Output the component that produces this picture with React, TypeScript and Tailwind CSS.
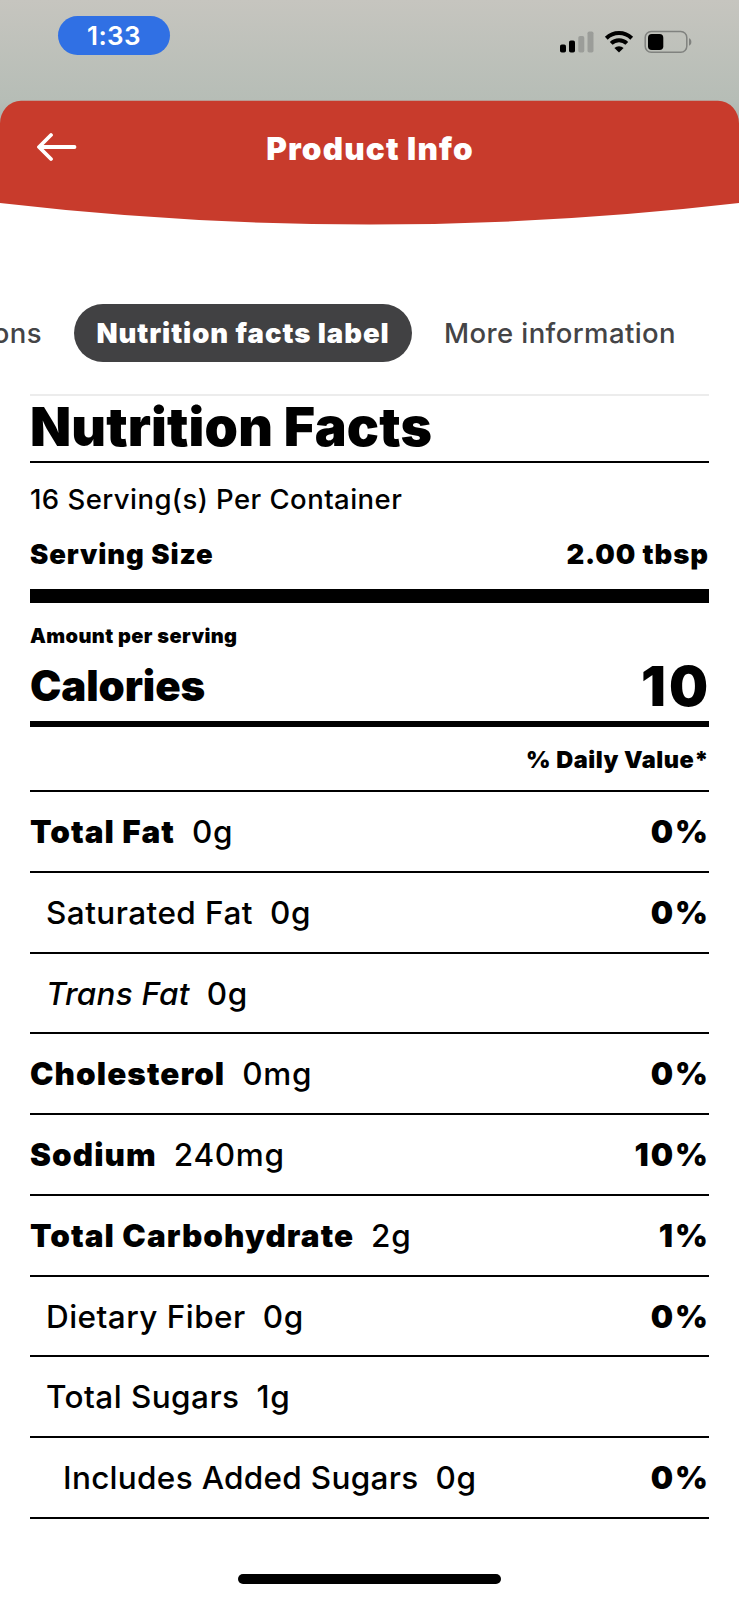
import React from 'react';

type Nutrient = {
  name: string;
  amount: string;
  daily?: string;
  nameClass: string;
  indent?: string;
};

const strong = 'font-black tracking-[1.05px]';
const regular = 'font-medium tracking-[0.45px]';

const nutrients: Nutrient[] = [
  { name: 'Total Fat', amount: '0g', daily: '0%', nameClass: strong },
  { name: 'Saturated Fat', amount: '0g', daily: '0%', nameClass: regular, indent: 'pl-4' },
  { name: 'Trans Fat', amount: '0g', nameClass: 'font-medium italic tracking-[0.2px]', indent: 'pl-4' },
  { name: 'Cholesterol', amount: '0mg', daily: '0%', nameClass: strong },
  { name: 'Sodium', amount: '240mg', daily: '10%', nameClass: strong },
  { name: 'Total Carbohydrate', amount: '2g', daily: '1%', nameClass: strong },
  { name: 'Dietary Fiber', amount: '0g', daily: '0%', nameClass: regular, indent: 'pl-4' },
  { name: 'Total Sugars', amount: '1g', nameClass: regular, indent: 'pl-4' },
  { name: 'Includes Added Sugars', amount: '0g', daily: '0%', nameClass: 'font-medium tracking-[0.3px]', indent: 'pl-[33px]' },
];

function StatusIcons() {
  return <svg width="134" height="24" viewBox="0 0 134 24" fill="none">
      <rect x="1" y="14.5" width="6" height="8" rx="1.8" fill="#000" />
      <rect x="10" y="10.5" width="6" height="12" rx="1.8" fill="#000" />
      <rect x="19.3" y="6" width="6" height="16.5" rx="1.8" fill="#9b9d99" />
      <rect x="28.5" y="1.5" width="6" height="21" rx="1.8" fill="#9b9d99" />
      <g stroke="#000" strokeWidth="4">
        <path d="M47.3 8.2a18.2 18.2 0 0 1 25.4 0" />
        <path d="M52.2 13.4a11.2 11.2 0 0 1 15.6 0" />
      </g>
      <path d="M60 22.6l-4.6-4.6a6.6 6.6 0 0 1 9.2 0z" fill="#000" />
      <rect x="86.2" y="1.5" width="41.6" height="20.8" rx="6" stroke="#80827f" strokeWidth="1.5" />
      <rect x="89" y="4" width="15.3" height="16" rx="3.8" fill="#000" />
      <path d="M130 8.3c3.2 1 3.2 6.4 0 7.4z" fill="#80827f" />
    </svg>;
}

function Header() {
  return <div className="h-[229px] bg-[linear-gradient(#c6c5bf_0px,#b6bdb6_100px,#abb2ae_125px,#fff_125px)]">
      <div className="flex h-[100px] items-start justify-between pl-[58px] pr-[46px] pt-4">
        <div className="flex h-[39px] w-[112px] items-center justify-center rounded-full bg-[#3070e4] pt-px text-[26px] font-semibold tracking-[0.4px] text-white">
          1:33
        </div>
        <div className="pt-[14px]">
          <StatusIcons />
        </div>
      </div>
      <div className="grid">
        <svg className="col-start-1 row-start-1" width="739" height="126" viewBox="0 0 739 126">
          <path d="M0 24A21 23 0 0 1 21 .7H718A21 23 0 0 1 739 24V103Q369.5 146 0 103Z" fill="#c83b2c" />
        </svg>
        <div className="col-start-1 row-start-1 grid h-[94px] grid-cols-[1fr_auto_1fr] items-center px-[37px]">
          <svg width="40" height="30" viewBox="0 0 40 30" fill="none" stroke="#fff" strokeWidth="3.8" strokeLinecap="round" strokeLinejoin="round">
            <path d="M37.5 15H2.5M14 3L2 15l12 12" />
          </svg>
          <h1 className="pl-px pt-[3px] text-[31.5px] font-black tracking-[1.15px] text-white">Product Info</h1>
        </div>
      </div>
    </div>;
}

function Tabs() {
  return <div className="mt-[75px] flex h-[58px] w-[739px] items-center overflow-hidden text-[27.5px] font-medium text-[#444446]">
      <div className="flex w-[42px] shrink-0 justify-end pt-[2px] tracking-[0.4px]">ons</div>
      <div className="ml-8 flex h-[58px] w-[338px] shrink-0 items-center justify-center rounded-full bg-[#414143] pt-[2px] font-black tracking-[0.95px] text-white">
        Nutrition facts label
      </div>
      <div className="ml-8 shrink-0 pt-[2px] tracking-[0.4px]">More information</div>
    </div>;
}

export default function App() {
  return <div className="h-[1600px] w-[739px] overflow-hidden bg-white font-['Inter','Liberation_Sans',sans-serif] leading-none text-black">
      <Header />
      <Tabs />
      <div className="mx-[30px] mt-8 w-[679px] border-t-2 border-[#ececec]">
        <h2 className="flex h-[67px] items-center border-b-2 border-black pb-1 text-[53.5px] font-black tracking-[0.15px]">
          Nutrition Facts
        </h2>
        <div className="flex h-[73px] items-center text-[27.5px] font-medium tracking-[0.45px]">
          16 Serving(s) Per Container
        </div>
        <div className="flex h-[67px] items-center justify-between border-b-[14px] border-black pb-4 text-[27.5px] font-black tracking-[0.9px]">
          <span>Serving Size</span>
          <span>2.00 tbsp</span>
        </div>
        <div className="flex h-[63px] items-center pt-[2px] text-[20px] font-black tracking-[0.4px]">
          Amount per serving
        </div>
        <div className="flex h-[61px] items-center justify-between border-b-[6px] border-black pb-4 font-black">
          <span className="text-[42px] tracking-[-0.1px]">Calories</span>
          <span className="-mr-[2px] pt-[2px] text-[55px] tracking-[3px]">10</span>
        </div>
        <div className="flex h-[65px] items-center justify-end border-b-2 border-black pt-[2px] text-[23.5px] font-black tracking-[0.5px]">
          % Daily Value*
        </div>
        {nutrients.map((n) => <div key={n.name} className="flex h-[80.78px] items-center justify-between border-b-2 border-black pt-px text-[31.5px]">
            <div className={n.indent}>
              <span className={n.nameClass}>{n.name}</span>
              <span className="ml-[17px] font-medium tracking-[0.7px]">{n.amount}</span>
            </div>
            <span className="-mr-[1px] font-black tracking-[2px]">{n.daily}</span>
          </div>)}
      </div>
      <div className="mx-auto mt-[55px] h-[10px] w-[263px] rounded-full bg-black" />
    </div>;
}
